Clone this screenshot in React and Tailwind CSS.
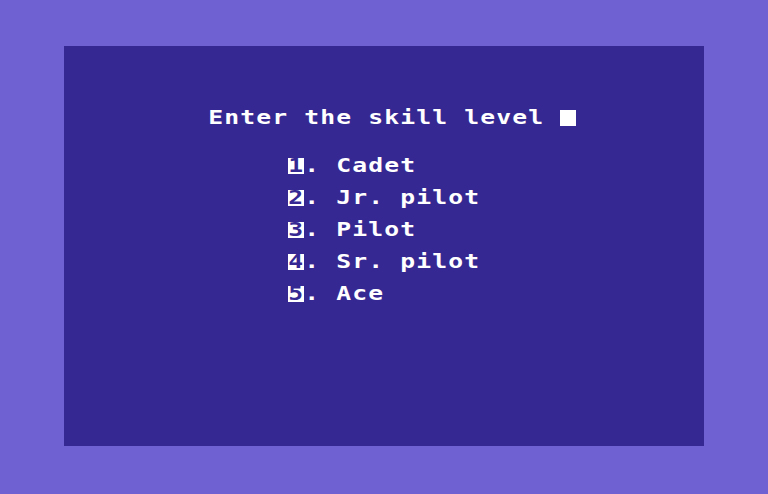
import React from 'react';

// 40x25 character screen, every cell 16x16 px (8x8 doubled)
const COLS = 40;
const ROWS = 25;

// [row, col, text, reverse]
const lines = [
  [4, 9, 'Enter the skill level ', false],
  [4, 31, ' ', true],
  [7, 14, '1', true], [7, 15, '. Cadet', false],
  [9, 14, '2', true], [9, 15, '. Jr. pilot', false],
  [11, 14, '3', true], [11, 15, '. Pilot', false],
  [13, 14, '4', true], [13, 15, '. Sr. pilot', false],
  [15, 14, '5', true], [15, 15, '. Ace', false],
];

const buildScreen = () => {
  const screen = Array.from({ length: ROWS }, () =>
    Array.from({ length: COLS }, () => ({ ch: ' ', rev: false }))
  );
  lines.forEach(([r, c, text, rev]) => {
    [...text].forEach((ch, i) => {
      screen[r][c + i] = { ch, rev };
    });
  });
  return screen;
};

const Cell = ({ ch, rev }) => (
  <div
    className={`w-4 h-4 flex items-center justify-center leading-4 ${
      rev ? 'bg-white text-[#352892]' : 'text-white'
    }`}
  >
    <span className="inline-block scale-x-[1.3] -translate-y-px">
      {ch === ' ' ? '\u00a0' : ch}
    </span>
  </div>
);

export default function App() {
  const screen = buildScreen();

  return (
    <div className="w-[768px] h-[494px] bg-[#7061d2] pt-[46px] px-16">
      <div
        className="w-[640px] h-[400px] bg-[#352892] flex flex-col text-[19px] font-bold"
        style={{ fontFamily: '"DejaVu Sans Mono", "Liberation Mono", monospace' }}
      >
        {screen.map((row, r) => (
          <div key={r} className="flex h-4">
            {row.map((cell, c) => (
              <Cell key={c} ch={cell.ch} rev={cell.rev} />
            ))}
          </div>
        ))}
      </div>
    </div>
  );
}
